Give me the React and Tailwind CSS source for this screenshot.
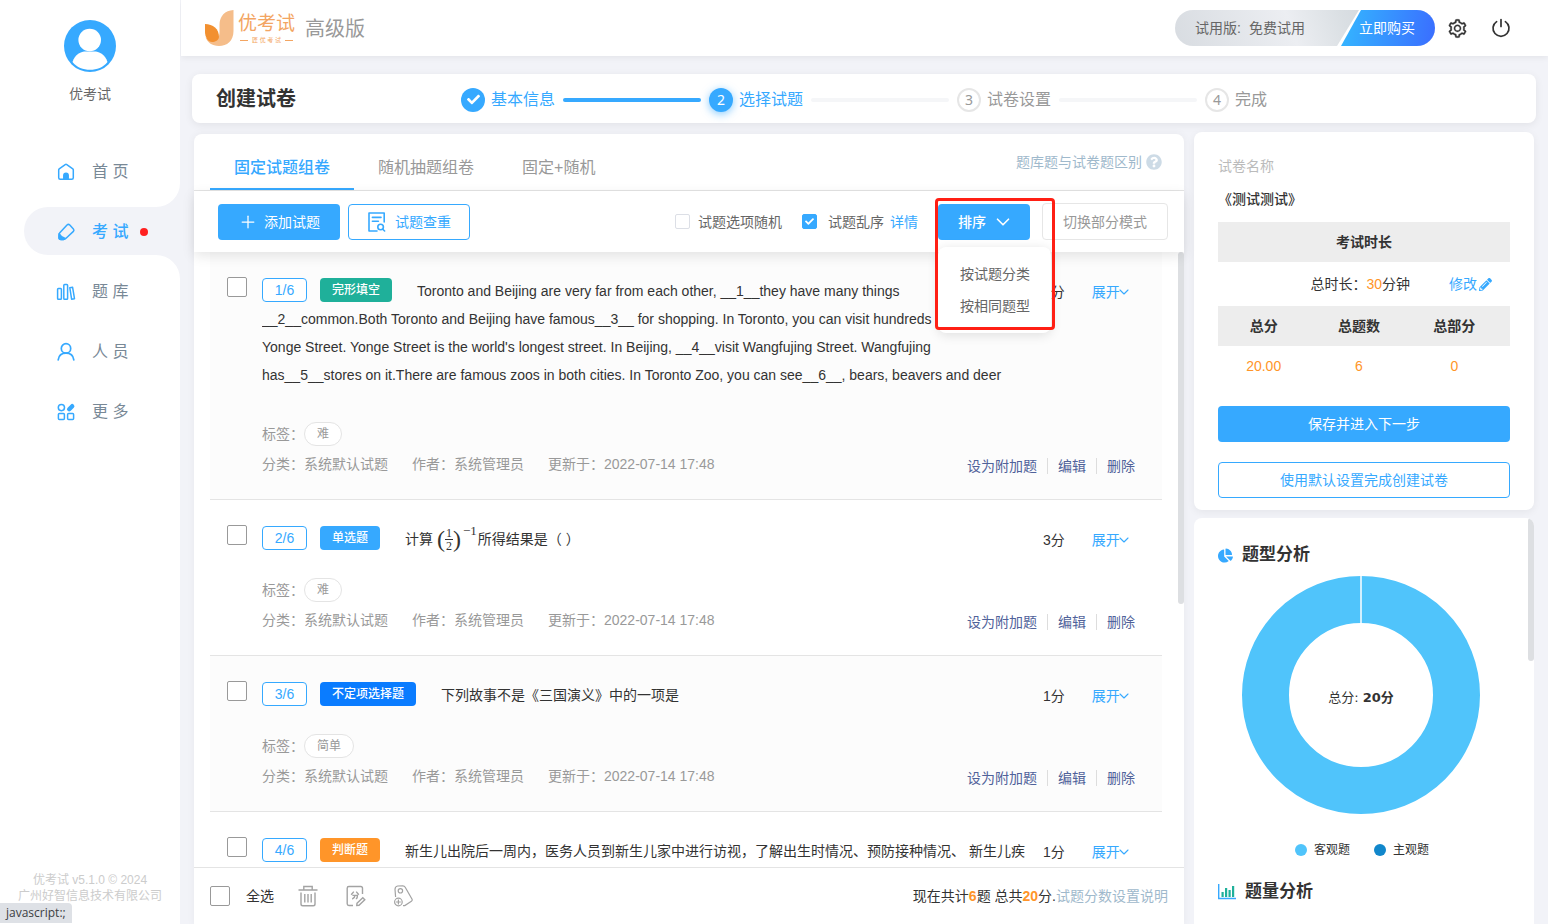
import React, { useState } from "react";
import { AiOutlineSetting } from "react-icons/ai";
import { FaCheck, FaChartPie, FaPencilAlt, FaQuestionCircle } from "react-icons/fa";
import { ChevronDown, Plus } from "lucide-react";

const iconProps = {
  width: 20,
  height: 20,
  viewBox: "0 0 20 20",
  fill: "none",
  stroke: "#36a9ff",
  strokeWidth: 1.5,
  strokeLinecap: "round",
  strokeLinejoin: "round",
  "aria-hidden": true,
};

const HomeIcon = () => (
  <svg {...iconProps}>
    <path d="M2.7 7.8 Q2.7 7.2 3.2 6.8 L9.2 2.6 Q10 2.1 10.8 2.6 L16.8 6.8 Q17.3 7.2 17.3 7.8 V15.8 Q17.3 17.3 15.8 17.3 H4.2 Q2.7 17.3 2.7 15.8 Z" />
    <path d="M7.8 17.3 V13.5 A2.2 2.2 0 0 1 12.2 13.5 V17.3 Z" fill="#36a9ff" />
  </svg>
);

const ExamIcon = () => (
  <svg {...iconProps}>
    <path d="M11 3 Q12.4 1.8 13.8 3 L17.4 6.9 Q18.5 8.2 17.4 9.4 L9.8 16.5 Q8.8 17.4 7.5 17.4 H5 Q3 17.4 3 15.4 V13 Q3 11.7 3.8 10.8 Z" />
    <path d="M3.2 11.8 Q4.6 14.8 9.2 16.5 Q8.4 17.4 7.5 17.4 H5 Q3 17.4 3 15.4 Z" fill="#36a9ff" />
  </svg>
);

const BankIcon = () => (
  <svg {...iconProps}>
    <rect x="1.6" y="6.4" width="3.8" height="10.9" rx="0.8" />
    <rect x="7.8" y="2.6" width="3.8" height="14.7" rx="0.8" />
    <path d="M13.8 5.7 L16.6 5.3 L18.5 16.7 L15.6 17.2 Z" />
  </svg>
);

const UserIcon = () => (
  <svg {...iconProps} strokeWidth="1.7">
    <circle cx="10" cy="6.4" r="4.7" />
    <path d="M2.2 17.8 C2.8 13.5 6 11.1 10 11.1 C14 11.1 17.2 13.5 17.8 17.8" />
  </svg>
);

const MoreIcon = () => (
  <svg {...iconProps}>
    <circle cx="5.4" cy="5.6" r="3.1" />
    <rect x="2.4" y="11.6" width="6" height="5.8" rx="1" />
    <rect x="11.6" y="11.6" width="6" height="5.8" rx="1" />
    <path d="M13.2 7.2 L16.2 4.2" strokeWidth="4.4" />
  </svg>
);

const PaperSearchIcon = () => (
  <svg {...iconProps} strokeWidth="1.6">
    <path d="M17.2 10 V1 H2 V19 H10" />
    <path d="M5.4 5.4 H14 M5.4 9.2 H11.4" />
    <circle cx="13.6" cy="15" r="2.8" />
    <path d="M15.8 17.2 L17.6 19" />
  </svg>
);

const TrashIcon = () => (
  <svg width="22" height="22" viewBox="0 0 22 22" fill="none" stroke="#a3a3a3" strokeWidth="1.4" aria-hidden="true">
    <path d="M1.5 5 H20.5 M6.8 5 V1.5 H15.2 V5 M4 7.5 V19 Q4 20.8 5.8 20.8 H16.2 Q18 20.8 18 19 V7.5 M7.8 9 V17.5 M11 9 V17.5 M14.2 9 V17.5" />
  </svg>
);

const ScoreIcon = () => (
  <svg width="22" height="22" viewBox="0 0 22 22" fill="none" stroke="#a3a3a3" strokeWidth="1.4" aria-hidden="true">
    <path d="M17.5 9 V3.2 Q17.5 1.5 15.8 1.5 H3.9 Q2.2 1.5 2.2 3.2 V18.8 Q2.2 20.5 3.9 20.5 H8" />
    <path d="M8.8 6.6 L6.2 9.8 M11.2 6.6 L13.8 9.8 M7.4 10.4 H12.4 Q12.4 13.6 10.8 13.6 M10 10.4 Q9.8 13 7.2 14" />
    <path d="M12 18.2 L17.8 12.8 L19.8 14.8 L14 20.2 L11.8 20.4 Z" />
  </svg>
);

const TagIcon = () => (
  <svg width="22" height="22" viewBox="0 0 22 22" fill="none" stroke="#a3a3a3" strokeWidth="1.2" aria-hidden="true">
    <path d="M2.6 12 L2 4.2 Q2.2 1.4 4.6 1 L9.8 0.8 Q11.4 0.9 12.2 2.2 L19.2 14.4 Q19.4 15.6 18.4 16.2 L11.8 20.6 L10 20.6" />
    <circle cx="7.4" cy="5.8" r="2.2" />
    <circle cx="5.4" cy="17" r="3.8" />
    <path d="M5.4 14.6 V19.4 M3 17 H7.8" />
  </svg>
);

const PowerIcon = () => (
  <svg width="20" height="20" viewBox="0 0 20 20" fill="none" stroke="#333" strokeWidth="1.7" strokeLinecap="round" aria-hidden="true">
    <path d="M10 1.5 V8.5 M5.6 3.6 A8 8 0 1 0 14.4 3.6" />
  </svg>
);

const BarsIcon = () => (
  <svg width="18" height="16" viewBox="0 0 18 16" aria-hidden="true">
    <path d="M0.7 0 V14.5 H18" fill="none" stroke="#36a9ff" strokeWidth="1.4" />
    <path d="M3.5 8 H5.7 V13 H3.5 Z M10.5 6 H12.7 V13 H10.5 Z" fill="#1fb09a" />
    <path d="M7 4 H9.2 V13 H7 Z M14 2 H16.2 V13 H14 Z" fill="#1fb09a" />
  </svg>
);

const navItems = [
  { label: "首 页", Icon: HomeIcon },
  { label: "考 试", Icon: ExamIcon, active: true },
  { label: "题 库", Icon: BankIcon },
  { label: "人 员", Icon: UserIcon },
  { label: "更 多", Icon: MoreIcon },
];

const steps = [
  { label: "基本信息", status: "done" },
  { label: "选择试题", status: "current" },
  { label: "试卷设置", status: "todo" },
  { label: "完成", status: "todo" },
];

const tabs = ["固定试题组卷", "随机抽题组卷", "固定+随机"];

// (1/2) to the power of -1
const HalfInverse = () => (
  <span className="ml-1 inline-flex h-7 items-center align-top font-['Liberation_Serif',serif]">
    <span className="text-2xl leading-7">(</span>
    <span className="flex flex-col items-center text-xs leading-3">
      <span className="border-b border-[#333] px-px">1</span>
      <span>2</span>
    </span>
    <span className="text-2xl leading-7">)</span>
    <span className="self-start pr-px pl-0.5 text-[13px] leading-3">−1</span>
  </span>
);

const questions = [
  {
    type: "完形填空",
    badge: "bg-[#1fb09a]",
    score: 2,
    tag: "难",
    tall: true,
    content: (
      <>
        Toronto and Beijing are very far from each other, __1__they have many things
        <br />
        __2__common.Both Toronto and Beijing have famous__3__ for shopping. In Toronto, you can visit hundreds
        <br />
        Yonge Street. Yonge Street is the world's longest street. In Beijing, __4__visit Wangfujing Street. Wangfujing
        <br />
        has__5__stores on it.There are famous zoos in both cities. In Toronto Zoo, you can see__6__, bears, beavers and deer
      </>
    ),
  },
  {
    type: "单选题",
    badge: "bg-[#36a9ff]",
    score: 3,
    tag: "难",
    content: (
      <>
        计算
        <HalfInverse />
        所得结果是（ ）
      </>
    ),
  },
  {
    type: "不定项选择题",
    badge: "bg-[#0a7cff]",
    score: 1,
    tag: "简单",
    content: "下列故事不是《三国演义》中的一项是",
  },
  {
    type: "判断题",
    badge: "bg-[#ff9529]",
    score: 1,
    content: "新生儿出院后一周内，医务人员到新生儿家中进行访视，了解出生时情况、预防接种情况、 新生儿疾",
  },
];

const Sidebar = () => (
  <aside className="relative flex w-[180px] shrink-0 flex-col bg-white">
    <div className="flex flex-col items-center pt-5">
      <svg width="52" height="52" viewBox="0 0 52 52" aria-hidden="true">
        <circle cx="26" cy="26" r="26" fill="#36a9ff" />
        <circle cx="25.7" cy="20" r="11.3" fill="#fff" />
        <path d="M8.5 42 C11 34 17 31.5 22 31.5 H30 C35 31.5 41 34 43.5 42 C39 47.5 33 49.8 26 49.8 C19 49.8 13 47.5 8.5 42 Z" fill="#fff" />
      </svg>
      <span className="mt-3 text-sm leading-5 text-[#666]">优考试</span>
    </div>
    <nav className="mt-[43px] flex flex-col gap-3 pl-6">
      {navItems.map(({ label, Icon, active }) => (
        <a
          key={label}
          href="#"
          className={`relative flex h-12 items-center gap-4 rounded-l-full pt-0.5 pl-8 text-base ${
            active ? "bg-[#f2f3f8] font-medium text-[#36a9ff]" : "text-[#788896]"
          }`}
        >
          {active && (
            <>
              <svg className="absolute -top-6 right-0" width="24" height="24" viewBox="0 0 24 24" aria-hidden="true">
                <path d="M24 0 V24 H0 A24 24 0 0 0 24 0 Z" fill="#f2f3f8" />
              </svg>
              <svg className="absolute right-0 -bottom-6" width="24" height="24" viewBox="0 0 24 24" aria-hidden="true">
                <path d="M0 0 H24 V24 A24 24 0 0 0 0 0 Z" fill="#f2f3f8" />
              </svg>
            </>
          )}
          <Icon />
          <span>{label}</span>
          {active && <span className="-ml-1 size-2 rounded-full bg-[#ff2020]" />}
        </a>
      ))}
    </nav>
    <p className="mt-auto pb-5 text-center text-xs leading-4 text-[#ccc]">
      优考试 v5.1.0 © 2024
      <br />
      广州好智信息技术有限公司
    </p>
    <div className="absolute bottom-px left-0 rounded-tr bg-[#dee1e6] px-1.5 font-['Open_Sans',sans-serif] text-xs leading-5 text-[#3c4043]">
      javascript:;
    </div>
  </aside>
);

const Header = () => (
  <header className="flex h-14 shrink-0 items-center justify-between bg-white pr-[37px] pl-6 shadow-[0_2px_6px_rgba(0,0,0,0.06)]">
    <div className="flex items-center">
      <svg width="29" height="36" viewBox="0 0 29 36" aria-hidden="true">
        <path d="M28.5 0 V21 C28.5 31 22 36 14 36 C7 36 2 32 0.5 27 C6 34 14.5 32 14.5 22 V15 C14.5 6 20 0.5 28.5 0 Z" fill="#f5bd8a" />
        <path d="M0 14 C8 14 14 19 14 27 C14 30 10 32 7 32 C3 32 0 27 0 22 Z" fill="#f29030" />
      </svg>
      <div className="ml-1 flex flex-col items-center text-[#f3a562]">
        <span className="text-[19px] leading-6">优考试</span>
        <span className="flex items-center gap-1 text-[6px] leading-2">
          <span className="h-px w-2 bg-[#f3a562]" />
          匠 优 考 试
          <span className="h-px w-2 bg-[#f3a562]" />
        </span>
      </div>
      <span className="ml-2.5 pt-0.5 text-xl text-[#999]">高级版</span>
    </div>
    <div className="flex items-center">
      <div className="flex h-9 items-center overflow-hidden rounded-full bg-[linear-gradient(70deg,#d8dce1_0%,#eceef2_45%,#dadfe3_65%,#c3cad3_100%)] pl-5 text-sm text-[#666]">
        <span>试用版:</span>
        <span className="ml-2">免费试用</span>
        <button className="ml-8 h-9 bg-white pl-1 [clip-path:polygon(22px_0,100%_0,100%_100%,0_100%)]">
          <span className="flex h-9 items-center bg-[linear-gradient(100deg,#34b8ff,#3a6dff)] pr-5 pl-[18px] text-white [clip-path:polygon(20px_0,100%_0,100%_100%,0_100%)]">
            立即购买
          </span>
        </button>
      </div>
      <button className="ml-3" aria-label="设置">
        <AiOutlineSetting size={21} color="#333" stroke="#333" strokeWidth={16} />
      </button>
      <button className="ml-[23px]" aria-label="退出">
        <PowerIcon />
      </button>
    </div>
  </header>
);

const Stepper = () => (
  <section className="mt-[18px] mr-3 ml-[11px] flex h-[49px] shrink-0 items-center rounded-lg bg-white pl-6 shadow-[0_2px_8px_rgba(0,0,0,0.07)]">
    <h1 className="w-[245px] shrink-0 pt-px text-xl font-bold text-[#333]">创建试卷</h1>
    <ol className="flex">
      {steps.map((step, i) => (
        <li
          key={step.label}
          className={`flex w-[248px] items-center pt-0.5 ${step.status === "todo" ? "text-[#999]" : "text-[#36a9ff]"}`}
        >
          <span
            className={`flex size-6 shrink-0 items-center justify-center rounded-full font-['Noto_Sans',sans-serif] text-sm ${
              step.status === "todo"
                ? "border-2 border-[#e6e6e6]"
                : step.status === "current"
                ? "bg-[#36a9ff] text-white shadow-[0_2px_8px_rgba(54,169,255,0.6)]"
                : "bg-[#36a9ff] text-white"
            }`}
          >
            {step.status === "done" ? <FaCheck size={13} /> : i + 1}
          </span>
          <span className="ml-1.5 leading-6">{step.label}</span>
          {i < steps.length - 1 && (
            <span className={`mx-2 h-1 flex-1 rounded-full ${step.status === "done" ? "bg-[#36a9ff]" : "bg-[#f5f6f8]"}`} />
          )}
        </li>
      ))}
    </ol>
  </section>
);

const Toolbar = () => {
  const [optionRandom, setOptionRandom] = useState(false);
  const [shuffle, setShuffle] = useState(true);

  return (
    <div className="relative z-10 flex h-[61px] shrink-0 items-center bg-white pr-4 pl-6 text-sm shadow-[0_4px_12px_rgba(0,0,0,0.1)]">
      <button className="flex h-9 items-center gap-1.5 rounded bg-[#36a9ff] px-5 text-white">
        <Plus size={20} strokeWidth={1.5} />
        添加试题
      </button>
      <button className="ml-2 flex h-9 items-center gap-2 rounded border border-[#36a9ff] px-[18px] text-[#36a9ff]">
        <PaperSearchIcon />
        试题查重
      </button>

      <label className="ml-auto flex items-center gap-2 text-[#666]">
        <input
          type="checkbox"
          checked={optionRandom}
          onChange={(e) => setOptionRandom(e.target.checked)}
          className="size-[15px] appearance-none rounded-xs border border-[#dcdfe6] bg-white checked:bg-[#36a9ff]"
        />
        试题选项随机
      </label>
      <label className="ml-5 flex items-center gap-[11px] text-[#666]">
        <span className="relative flex">
          <input
            type="checkbox"
            checked={shuffle}
            onChange={(e) => setShuffle(e.target.checked)}
            className="size-[15px] appearance-none rounded-xs border border-[#dcdfe6] bg-white checked:border-[#36a9ff] checked:bg-[#36a9ff]"
          />
          {shuffle && <FaCheck size={9} className="pointer-events-none absolute top-[3px] left-[3px] text-white" />}
        </span>
        试题乱序
      </label>
      <a href="#" className="ml-1.5 text-[#36a9ff]">详情</a>

      <div className="relative ml-5">
        <button className="flex h-9 items-center gap-1.5 rounded bg-[#36a9ff] pr-4 pl-5 font-medium text-white">
          排序
          <ChevronDown size={22} strokeWidth={1.8} />
        </button>
        <ul className="absolute top-[43px] left-0 z-10 w-[113px] rounded-lg bg-white py-[11px] shadow-[0_2px_12px_rgba(0,0,0,0.12)]">
          {["按试题分类", "按相同题型"].map((label) => (
            <li key={label}>
              <button className="h-8 w-full pl-[22px] text-left text-[#666]">{label}</button>
            </li>
          ))}
        </ul>
        <div className="pointer-events-none absolute -top-1.5 -left-[3px] z-20 h-[132px] w-[120px] rounded border-[3px] border-[#ff1f14]" />
      </div>
      <button className="ml-3 h-[37px] rounded border border-[#e6e6e6] px-5 text-[#999]">切换部分模式</button>
    </div>
  );
};

const Question = ({ question, index }) => (
  <li className={`border-b border-[#e4e4e4] pt-[25px] pb-[21px] pl-[17px] ${index % 2 === 0 ? "bg-[#fcfcfc]" : "bg-white"}`}>
    <div className="flex items-start">
      <input
        type="checkbox"
        aria-label={`选择第${index + 1}题`}
        className="size-5 shrink-0 appearance-none rounded-xs border border-[#999] bg-white checked:bg-[#36a9ff]"
      />
      <div className="ml-[15px] min-w-0 flex-1">
        <div className="flex">
          <div className={`min-w-0 flex-1 overflow-hidden leading-7 whitespace-nowrap ${question.tall ? "h-[120px]" : "h-7"}`}>
            <span className="mt-px mr-[13px] inline-flex h-6 w-[45px] items-center justify-center rounded border border-[#36a9ff] bg-white align-top text-[#36a9ff]">
              {index + 1}/6
            </span>
            <span className={`mt-px mr-[25px] inline-flex h-6 items-center rounded px-3 align-top text-xs font-medium text-white ${question.badge}`}>
              {question.type}
            </span>
            {question.content}
          </div>
          <div className="flex w-[132px] shrink-0 gap-[27px] pt-px pl-[13px] leading-7">
            <span>{question.score}分</span>
            <a href="#" className="flex h-7 items-center text-[#36a9ff]">
              展开
              <ChevronDown size={16} strokeWidth={1.6} className="-ml-1" />
            </a>
          </div>
        </div>
        {question.tag && (
          <>
            <div className={`flex h-6 items-center text-[#999] ${question.tall ? "mt-[25px]" : "mt-6"}`}>
              标签：
              <span className="flex h-6 items-center rounded-full border border-[#e4e4e4] bg-white px-3 text-xs">{question.tag}</span>
            </div>
            <div className="mt-2 flex h-6 justify-between pr-[27px] leading-5">
              <div className="flex gap-6 text-[#999]">
                <span>分类：系统默认试题</span>
                <span>作者：系统管理员</span>
                <span>更新于：2022-07-14 17:48</span>
              </div>
              <div className="flex items-center text-[#50629a]">
                <button>设为附加题</button>
                <span className="mx-2.5 h-4 w-px bg-[#ddd]" />
                <button>编辑</button>
                <span className="mx-2.5 h-4 w-px bg-[#ddd]" />
                <button>删除</button>
              </div>
            </div>
          </>
        )}
      </div>
    </div>
  </li>
);

const QuestionPanel = () => {
  const [tab, setTab] = useState(0);

  return (
    <section className="flex min-w-0 flex-1 flex-col rounded-t-lg bg-white text-sm text-[#333] shadow-[0_0_8px_rgba(0,0,0,0.05)]">
      <div className="flex h-[57px] shrink-0 items-end justify-between border-b border-[#e4e4e4] pr-[22px] pl-4">
        <div className="flex h-full" role="tablist">
          {tabs.map((label, i) => (
            <button
              key={label}
              role="tab"
              aria-selected={tab === i}
              onClick={() => setTab(i)}
              className={`h-full border-b-2 px-6 pt-3.5 text-base ${
                tab === i ? "border-[#36a9ff] font-medium text-[#36a9ff]" : "border-transparent text-[#999]"
              }`}
            >
              {label}
            </button>
          ))}
        </div>
        <a href="#" className="flex h-full items-center gap-1 text-[#9fb9cc]">
          题库题与试卷题区别
          <FaQuestionCircle size={16} color="#cddbe6" />
        </a>
      </div>

      <Toolbar />

      <div className="flex min-h-0 flex-1 justify-between overflow-hidden">
        <ol className="min-w-0 flex-1 pr-4 pl-4">
          {questions.map((question, i) => (
            <Question key={question.type} question={question} index={i} />
          ))}
        </ol>
        <div className="h-[352px] w-1.5 rounded-full bg-[#dddfe2]" />
      </div>

      <div className="flex h-[57px] shrink-0 items-center border-t border-[#e4e4e4] bg-white px-4">
        <label className="flex items-center gap-4">
          <input type="checkbox" className="size-5 appearance-none rounded-xs border border-[#999] bg-white checked:bg-[#36a9ff]" />
          全选
        </label>
        <div className="ml-[23px] flex gap-[26px]">
          <button aria-label="删除"><TrashIcon /></button>
          <button aria-label="设置分数"><ScoreIcon /></button>
          <button aria-label="设置标签"><TagIcon /></button>
        </div>
        <p className="ml-auto">
          现在共计<b className="text-[#ff9529]">6</b>题 总共<b className="text-[#ff9529]">20</b>分.
          <a href="#" className="text-[#9fb9cc]">试题分数设置说明</a>
        </p>
      </div>
    </section>
  );
};

const PaperInfo = () => (
  <section className="rounded-lg bg-white px-6 pt-6 pb-3 text-sm text-[#333] shadow-[0_2px_8px_rgba(0,0,0,0.06)]">
    <p className="leading-5 text-[#bbb]">试卷名称</p>
    <h2 className="mt-[13px] leading-5 font-medium">《测试测试》</h2>
    <div className="mt-[13px] h-10 bg-[#ededed] text-center leading-10 font-bold">考试时长</div>
    <div className="flex h-11 items-center justify-end pr-[18px]">
      <span>
        总时长：<span className="text-[#ff9529]">30</span>分钟
      </span>
      <a href="#" className="ml-[39px] flex items-center gap-0.5 text-[#36a9ff]">
        修改
        <FaPencilAlt size={13} />
      </a>
    </div>
    <table className="w-full table-fixed text-center">
      <thead className="h-10 bg-[#ededed]">
        <tr>
          <th className="pr-1.5">总分</th>
          <th className="pr-2.5">总题数</th>
          <th className="pr-3.5">总部分</th>
        </tr>
      </thead>
      <tbody className="h-10 text-[#ff9529]">
        <tr>
          <td className="pr-1.5">20.00</td>
          <td className="pr-2.5">6</td>
          <td className="pr-3.5">0</td>
        </tr>
      </tbody>
    </table>
    <button className="mt-5 h-9 w-full rounded bg-[#36a9ff] text-white">保存并进入下一步</button>
    <button className="mt-5 h-9 w-full rounded border border-[#36a9ff] text-[#36a9ff]">使用默认设置完成创建试卷</button>
  </section>
);

const Analysis = () => (
  <section className="mt-2 flex min-h-0 flex-1 justify-between overflow-hidden rounded-t-lg bg-white text-[#333]">
    <div className="flex-1 pt-[25px] pl-6">
      <h2 className="flex h-6 items-center gap-[9px] text-[17px] font-bold">
        <FaChartPie size={15} color="#36a9ff" />
        题型分析
      </h2>
      <div className="mt-2 flex justify-center pr-6">
        <svg width="240" height="240" viewBox="0 0 240 240">
          <circle cx="120" cy="120" r="95.5" fill="none" stroke="#50c4fb" strokeWidth="47" />
          <path d="M120 0 V49" stroke="#fff" strokeWidth="1.5" />
          <text x="120" y="127" textAnchor="middle" fontSize="13" fill="#333" fontFamily="'DejaVu Sans', 'Noto Sans CJK SC', sans-serif">
            总分: <tspan fontWeight="bold">20分</tspan>
          </text>
        </svg>
      </div>
      <div className="mt-[25px] flex justify-center gap-6 pr-[22px] text-xs leading-5">
        <span className="flex items-center gap-[7px]">
          <span className="size-3 rounded-full bg-[#50c4fb]" />
          客观题
        </span>
        <span className="flex items-center gap-[7px]">
          <span className="size-3 rounded-full bg-[#1187cb]" />
          主观题
        </span>
      </div>
      <h2 className="mt-5 flex h-6 items-center gap-[9px] text-[17px] font-bold">
        <BarsIcon />
        题量分析
      </h2>
    </div>
    <div className="h-[143px] w-1.5 rounded-full bg-[#dddfe2]" />
  </section>
);

const App = () => (
  <div className="flex h-screen overflow-hidden bg-[#f2f3f8] font-['Liberation_Sans','Noto_Sans_CJK_SC',sans-serif]">
    <Sidebar />
    <div className="ml-px flex min-w-0 flex-1 flex-col">
      <Header />
      <Stepper />
      <main className="flex min-h-0 flex-1 gap-2.5 pr-3.5 pl-[13px]">
        <div className="flex min-w-0 flex-1 flex-col pt-[11px]">
          <div className="flex min-h-0 flex-1">
            <QuestionPanel />
          </div>
        </div>
        <aside className="flex w-[340px] shrink-0 flex-col pt-[9px]">
          <PaperInfo />
          <Analysis />
        </aside>
      </main>
    </div>
  </div>
);

export default App;
